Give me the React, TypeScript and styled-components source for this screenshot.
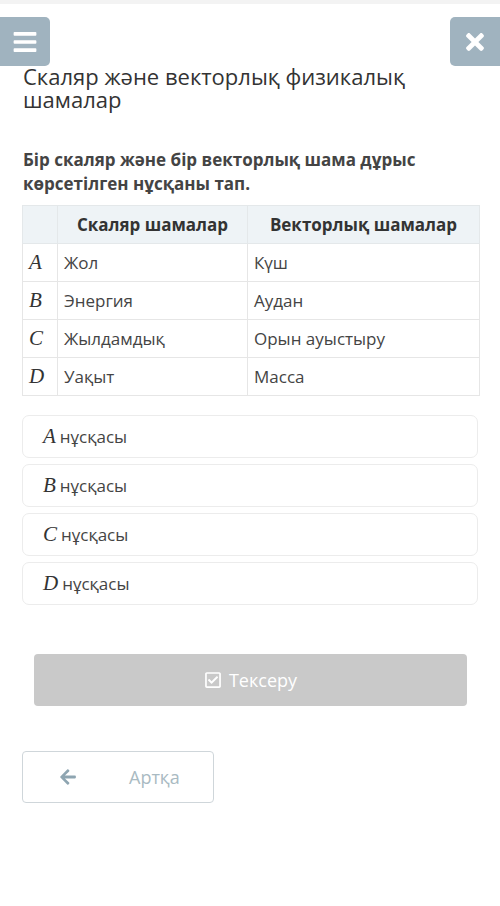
import React, { FC } from 'react'
import styled, { createGlobalStyle } from 'styled-components'
import { FaBars, FaTimes, FaArrowLeft, FaRegCheckSquare } from 'react-icons/fa'

const GlobalStyle = createGlobalStyle`
  html, body {
    margin: 0;
    padding: 0;
    background: #fff;
  }

  body {
    font-family: 'Open Sans', 'Noto Sans', sans-serif;
    color: #333;
  }
`

const Page = styled.div`
  width: 500px;
  min-height: 906px;
  border-top: 4px solid #f3f3f3;
  box-sizing: border-box;
`

const TopBar = styled.div`
  display: flex;
  justify-content: space-between;
  padding-top: 13px;
`

const IconButton = styled.button`
  width: 50px;
  height: 49px;
  border: none;
  border-radius: 5px;
  background: #a0b3bf;
  color: #fff;
  display: flex;
  align-items: center;
  justify-content: center;
  font-size: 26px;
  padding: 0;

  &.left {
    border-top-left-radius: 0;
    border-bottom-left-radius: 0;
  }

  &.right {
    border-top-right-radius: 0;
    border-bottom-right-radius: 0;
  }
`

const Content = styled.div`
  padding: 0 22px;
`

const Title = styled.h1`
  margin: -1px 0 0 1px;
  font-weight: 400;
  font-size: 22px;
  line-height: 23px;
  color: #333;
`

const Question = styled.p`
  margin: 37px 0 0 1px;
  font-weight: 700;
  font-size: 17px;
  line-height: 24px;
  color: #444;
`

const Table = styled.table`
  margin-top: 9px;
  width: 458px;
  border-collapse: collapse;
  font-size: 17px;
`

const Th = styled.th`
  height: 37px;
  background: #eef3f6;
  border: 1px solid #e4e8ea;
  font-weight: 700;
  color: #333;
  text-align: center;
  padding: 0 6px;
`

const Td = styled.td`
  height: 37px;
  border: 1px solid #e6e6e6;
  padding: 0 6px;
  color: #444;
`

const MathVar = styled.span`
  font-family: 'Liberation Serif', 'DejaVu Serif', serif;
  font-style: italic;
  font-size: 21px;
  color: #333;
`

const Options = styled.div`
  margin-top: 19px;
  display: flex;
  flex-direction: column;
  gap: 6px;
`

const Option = styled.div`
  box-sizing: border-box;
  height: 43px;
  border: 1px solid #ececec;
  border-radius: 7px;
  display: flex;
  align-items: center;
  padding: 0 20px;
  font-size: 17px;
  color: #444;
  gap: 4px;
`

const CheckButton = styled.button`
  margin: 49px 0 0 12px;
  width: 433px;
  height: 52px;
  border: none;
  border-radius: 4px;
  background: #c9c9c9;
  color: #fff;
  font-family: 'Open Sans', sans-serif;
  font-size: 18px;
  display: flex;
  align-items: center;
  justify-content: center;
  gap: 7px;

  svg {
    font-size: 18px;
  }
`

const BackButton = styled.button`
  margin-top: 45px;
  width: 192px;
  height: 52px;
  border: 1px solid #cfd6da;
  border-radius: 4px;
  background: #fff;
  color: #a9bac2;
  font-family: 'Open Sans', sans-serif;
  font-size: 18px;
  display: flex;
  align-items: center;
  padding: 0 0 0 36px;
  gap: 52px;

  svg {
    color: #8ea5b1;
    font-size: 18px;
  }
`

const rows = [
  ['A', 'Жол', 'Күш'],
  ['B', 'Энергия', 'Аудан'],
  ['C', 'Жылдамдық', 'Орын ауыстыру'],
  ['D', 'Уақыт', 'Масса'],
]

const App: FC = () => {
  return (
    <Page>
      <GlobalStyle />
      <TopBar>
        <IconButton className="left">
          <FaBars />
        </IconButton>
        <IconButton className="right">
          <FaTimes />
        </IconButton>
      </TopBar>
      <Content>
        <Title>
          Скаляр және векторлық физикалық
          <br />
          шамалар
        </Title>
        <Question>Бір скаляр және бір векторлық шама дұрыс көрсетілген нұсқаны тап.</Question>
        <Table>
          <thead>
            <tr>
              <Th style={{ width: 22 }} />
              <Th style={{ width: 177 }}>Скаляр шамалар</Th>
              <Th>Векторлық шамалар</Th>
            </tr>
          </thead>
          <tbody>
            {rows.map(([v, a, b]) => (
              <tr key={v}>
                <Td>
                  <MathVar>{v}</MathVar>
                </Td>
                <Td>{a}</Td>
                <Td>{b}</Td>
              </tr>
            ))}
          </tbody>
        </Table>
        <Options>
          {rows.map(([v]) => (
            <Option key={v}>
              <MathVar>{v}</MathVar> нұсқасы
            </Option>
          ))}
        </Options>
        <CheckButton>
          <FaRegCheckSquare /> Тексеру
        </CheckButton>
        <BackButton>
          <FaArrowLeft />
          Артқа
        </BackButton>
      </Content>
    </Page>
  )
}

export default App
